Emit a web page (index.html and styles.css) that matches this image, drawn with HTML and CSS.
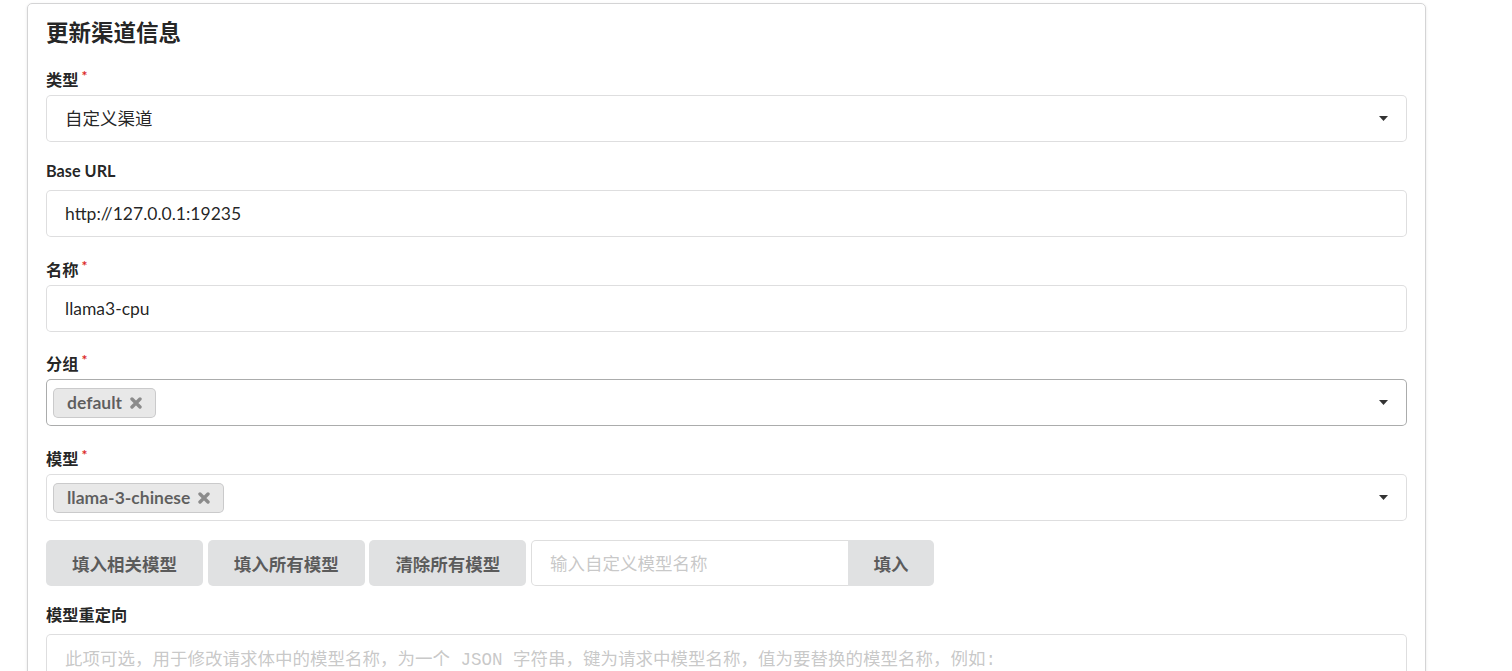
FILE: index.html
```html
<!DOCTYPE html>
<html lang="zh-CN">
<head>
    <meta charset="UTF-8">
    <meta name="viewport" content="width=device-width, initial-scale=1.0">
    <title>更新渠道信息</title>
    <link rel="stylesheet" href="styles.css">
</head>
<body>
    <div class="page">
        <div class="card">
            <h3 class="title">更新渠道信息</h3>

            <form class="form" onsubmit="return false">
                <div class="field required">
                    <label>类型</label>
                    <div class="select">
                        <span class="value">自定义渠道</span>
                        <svg class="caret" width="9" height="5" viewBox="0 0 9 5"><path d="M0 0H9L4.5 5Z"/></svg>
                    </div>
                </div>

                <div class="field">
                    <label>Base URL</label>
                    <input class="input" type="text" value="http://127.0.0.1:19235">
                </div>

                <div class="field required">
                    <label>名称</label>
                    <input class="input" type="text" value="llama3-cpu">
                </div>

                <div class="field required">
                    <label>分组</label>
                    <div class="select multiple active">
                        <span class="tag">default
                            <svg class="remove" width="12" height="12" viewBox="0 0 12 12"><path d="M2 2L10 10M10 2L2 10"/></svg>
                        </span>
                        <svg class="caret" width="9" height="5" viewBox="0 0 9 5"><path d="M0 0H9L4.5 5Z"/></svg>
                    </div>
                </div>

                <div class="field required">
                    <label>模型</label>
                    <div class="select multiple">
                        <span class="tag">llama-3-chinese
                            <svg class="remove" width="12" height="12" viewBox="0 0 12 12"><path d="M2 2L10 10M10 2L2 10"/></svg>
                        </span>
                        <svg class="caret" width="9" height="5" viewBox="0 0 9 5"><path d="M0 0H9L4.5 5Z"/></svg>
                    </div>
                </div>

                <div class="field actions">
                    <button class="btn" type="button">填入相关模型</button>
                    <button class="btn" type="button">填入所有模型</button>
                    <button class="btn" type="button">清除所有模型</button>
                    <div class="action-input">
                        <input type="text" placeholder="输入自定义模型名称">
                        <button class="btn" type="button">填入</button>
                    </div>
                </div>

                <div class="field">
                    <label>模型重定向</label>
                    <textarea class="textarea" placeholder="此项可选，用于修改请求体中的模型名称，为一个 JSON 字符串，键为请求中模型名称，值为要替换的模型名称，例如:"></textarea>
                </div>
            </form>
        </div>
    </div>
</body>
</html>
```

FILE: styles.css
```css
body {
    margin: 0;
    background: #ffffff;
    font-family: Lato, "Noto Sans CJK SC", sans-serif;
    font-size: 17.5px;
    color: rgba(0, 0, 0, 0.87);
}
.page {
    padding: 3px 0 0 27px;
}
.card {
    width: 1399px;
    box-sizing: border-box;
    padding: 14px 18px 18px;
    border: 1px solid #d4d4d5;
    border-radius: 5px;
    box-shadow: 0 1px 3px 0 #e4e4e5;
}
.title {
    margin: 0 0 18px;
    font-size: 22.5px;
    line-height: 29px;
    font-weight: 700;
}
.field {
    margin-bottom: 17.75px;
}
.field label {
    display: block;
    height: 24px;
    line-height: 22px;
    margin-bottom: 6px;
    font-size: 16.25px;
    font-weight: 700;
}
.required label::after {
    content: "*";
    color: #db2828;
    margin-left: 3px;
    font-size: 14px;
    vertical-align: 5px;
}
.input,
.select,
.textarea,
.action-input input {
    box-sizing: border-box;
    border: 1px solid rgba(34, 36, 38, 0.15);
    border-radius: 5px;
    font-family: inherit;
    font-size: 17.5px;
    color: rgba(0, 0, 0, 0.87);
    background: #fff;
    outline: none;
}
.input {
    display: block;
    width: 100%;
    height: 47px;
    padding: 0 18px;
}
.select {
    display: flex;
    align-items: center;
    height: 47px;
    padding: 0 18px;
}
.select .value {
    flex: 1;
    padding-bottom: 3px;
}
.caret {
    margin-left: auto;
    fill: rgba(0, 0, 0, 0.8);
}
.select.multiple {
    padding-left: 6px;
}
.select.active {
    border-color: rgba(34, 36, 38, 0.38);
}
.tag {
    display: inline-flex;
    align-items: center;
    height: 30px;
    padding: 0 14px;
    border-radius: 5px;
    background: #e8e8e8;
    box-shadow: inset 0 0 0 1px rgba(34, 36, 38, 0.15);
    color: rgba(0, 0, 0, 0.6);
    font-weight: 700;
}
.remove {
    margin-left: 8px;
    stroke: rgba(0, 0, 0, 0.4);
    stroke-width: 3.4;
    stroke-linecap: round;
}
.actions {
    display: flex;
    gap: 4.7px;
    padding-top: 1.5px;
}
.btn {
    height: 46px;
    padding: 0 26px;
    border: none;
    border-radius: 5px;
    background: #e0e1e2;
    color: rgba(0, 0, 0, 0.6);
    font-family: inherit;
    font-size: 17.5px;
    font-weight: 700;
    cursor: pointer;
}
.action-input {
    display: flex;
}
.action-input input {
    width: 317px;
    height: 46px;
    padding: 0 18px;
    border-right: none;
    border-radius: 5px 0 0 5px;
}
.action-input .btn {
    padding: 0 25.5px;
    border-radius: 0 5px 5px 0;
}
::placeholder {
    color: rgba(191, 191, 191, 0.87);
}
.textarea {
    display: block;
    width: 100%;
    height: 180px;
    padding: 13px 18px;
    font-family: "Liberation Mono", "Noto Sans CJK SC", monospace;
    line-height: 24px;
    resize: vertical;
}
```
